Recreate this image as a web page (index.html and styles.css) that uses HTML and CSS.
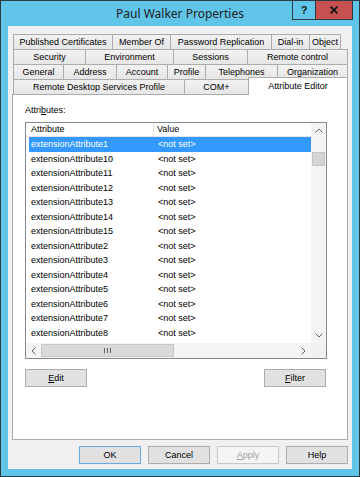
FILE: index.html
```html
<!DOCTYPE html>
<html lang="en">
<head>
  <meta charset="UTF-8">
  <title>Paul Walker Properties</title>
  <link rel="stylesheet" href="styles.css">
</head>
<body>
  <div class="window">
    <div class="titlebar">
      <span class="title">Paul Walker Properties</span>
      <div class="caption-btns">
        <span class="cap-btn help">?</span>
        <span class="cap-btn close">
          <svg width="10" height="8" viewBox="0 0 10 8"><path d="M1.5 0.5 L8.5 7.5 M8.5 0.5 L1.5 7.5" stroke="#1a1a1a" stroke-width="1.8"/></svg>
        </span>
      </div>
    </div>

    <div class="client">
      <!-- onglets sur quatre rangées -->
      <div class="tabs">
        <div class="tab-row row-1">
          <div class="tab">Published Certificates</div>
          <div class="tab">Member Of</div>
          <div class="tab">Password Replication</div>
          <div class="tab">Dial-in</div>
          <div class="tab">Object</div>
        </div>
        <div class="tab-row row-2">
          <div class="tab">Security</div>
          <div class="tab">Environment</div>
          <div class="tab">Sessions</div>
          <div class="tab">Remote control</div>
        </div>
        <div class="tab-row row-3">
          <div class="tab">General</div>
          <div class="tab">Address</div>
          <div class="tab">Account</div>
          <div class="tab">Profile</div>
          <div class="tab">Telephones</div>
          <div class="tab">Organization</div>
        </div>
        <div class="tab-row row-4">
          <div class="tab">Remote Desktop Services Profile</div>
          <div class="tab">COM+</div>
          <div class="tab active">Attribute Editor</div>
        </div>
      </div>

      <div class="panel">
        <div class="attr-label">Attri<u>b</u>utes:</div>
        <div class="listview">
          <div class="list-main">
            <div class="list-header">
              <span class="hcol">Attribute</span>
              <span class="hcol">Value</span>
            </div>
            <div class="list-body" id="listBody"></div>
          </div>
          <div class="vscroll">
            <div class="sb-arrow">
              <svg width="8" height="5" viewBox="0 0 8 5"><path d="M0.5 4.5 L4 1 L7.5 4.5" fill="none" stroke="#606060"/></svg>
            </div>
            <div class="sb-track"><div class="sb-thumb-v"></div></div>
            <div class="sb-arrow">
              <svg width="8" height="5" viewBox="0 0 8 5"><path d="M0.5 0.5 L4 4 L7.5 0.5" fill="none" stroke="#606060"/></svg>
            </div>
          </div>
          <div class="hscroll">
            <div class="sb-arrow">
              <svg width="5" height="8" viewBox="0 0 5 8"><path d="M4.5 0.5 L1 4 L4.5 7.5" fill="none" stroke="#606060"/></svg>
            </div>
            <div class="sb-thumb-h">
              <svg width="7" height="5" viewBox="0 0 7 5"><path d="M0.5 0 V5 M3.5 0 V5 M6.5 0 V5" stroke="#606060"/></svg>
            </div>
            <div class="sb-track"></div>
            <div class="sb-arrow">
              <svg width="5" height="8" viewBox="0 0 5 8"><path d="M0.5 0.5 L4 4 L0.5 7.5" fill="none" stroke="#606060"/></svg>
            </div>
          </div>
          <div class="sb-corner"></div>
        </div>
        <div class="panel-btns">
          <button class="btn"><u>E</u>dit</button>
          <button class="btn"><u>F</u>ilter</button>
        </div>
      </div>

      <div class="dialog-btns">
        <button class="btn default">OK</button>
        <button class="btn">Cancel</button>
        <button class="btn disabled"><u>A</u>pply</button>
        <button class="btn">Help</button>
      </div>
    </div>
  </div>

  <script>
    // Liste des attributs affichés
    const attrs = ['1', '10', '11', '12', '13', '14', '15', '2', '3', '4', '5', '6', '7', '8'];
    const listBody = document.getElementById('listBody');
    attrs.forEach((n, i) => {
      const row = document.createElement('div');
      row.className = 'row' + (i === 0 ? ' selected' : '');
      row.innerHTML = `<span>extensionAttribute${n}</span><span>&lt;not set&gt;</span>`;
      listBody.appendChild(row);
    });
  </script>
</body>
</html>
```

FILE: styles.css
```css
* {
  box-sizing: border-box;
}
body {
  margin: 0;
  font-family: "Liberation Sans", Arial, sans-serif;
  font-size: 9px;
  color: #000;
}
.window {
  width: 360px;
  height: 477px;
  border: 1px solid #2b3a43;
  background: #60c5e8;
  display: flex;
  flex-direction: column;
}
.titlebar {
  height: 25px;
  flex: none;
  display: grid;
  grid-template-columns: 1fr auto 1fr;
}
.title {
  grid-column: 2;
  align-self: center;
  font-family: "Noto Sans", "Liberation Sans", sans-serif;
  font-size: 12px;
  color: #222;
  white-space: nowrap;
}
.caption-btns {
  grid-column: 3;
  justify-self: end;
  align-self: start;
  display: flex;
  margin-right: 6px;
}
.cap-btn {
  height: 19px;
  border: 1px solid #2b3a43;
  border-top: none;
  display: flex;
  align-items: center;
  justify-content: center;
}
.help {
  width: 24px;
  font-weight: bold;
  font-size: 11px;
  color: #1a1a1a;
}
.close {
  width: 38px;
  margin-left: -1px;
  background: #c75050;
}

.client {
  flex: 1;
  margin: 0 7px 7px;
  background: #f0f0f0;
  padding: 8px 4px 5px;
  display: flex;
  flex-direction: column;
}

/* onglets */
.tabs {
  margin-left: 1px;
}
.tab-row {
  display: grid;
  height: 15px;
}
.row-1 { grid-template-columns: 99px 58px 101px 38px 32px; }
.row-2 { grid-template-columns: 72px 88px 74px 101px; }
.row-3 { grid-template-columns: 50px 53px 51px 38px 72px 71px; }
.row-4 { grid-template-columns: 171px 64px 100px; }
.tab {
  border-top: 1px solid #acacac;
  border-left: 1px solid #acacac;
  background: linear-gradient(#f2f2f2, #e6e6e6);
  display: flex;
  align-items: center;
  justify-content: center;
  white-space: nowrap;
  height: 15px;
}
.tab:last-child {
  border-right: 1px solid #acacac;
}
.tab.active {
  background: #fff;
  align-self: start;
  margin-top: -2px;
  height: 18px;
  padding-bottom: 2px;
  position: relative;
  z-index: 1;
}

.panel {
  height: 346px;
  border: 1px solid #acacac;
  background: #fff;
  padding: 0 20px 0 12px;
}
.attr-label {
  margin: 10px 0 6px;
  line-height: 11px;
}
.listview {
  height: 237px;
  border: 1px solid #828790;
  display: grid;
  grid-template-columns: 1fr 15px;
  grid-template-rows: 1fr 15px;
}
.list-main {
  overflow: hidden;
}
.list-header {
  height: 14px;
  display: grid;
  grid-template-columns: 128px 1fr;
  border-bottom: 1px solid #e5e5e5;
  line-height: 13px;
}
.hcol {
  padding-left: 5px;
}
.hcol:first-child {
  border-right: 1px solid #e5e5e5;
}
.hcol + .hcol {
  padding-left: 3px;
}
.row {
  height: 14.5px;
  line-height: 14.5px;
  display: grid;
  grid-template-columns: 127px 1fr;
  margin-left: 3px;
  padding-left: 2px;
  white-space: nowrap;
}
.row.selected {
  background: #3399ff;
  color: #fff;
}

/* barres de défilement */
.vscroll {
  display: flex;
  flex-direction: column;
  background: #f4f4f4;
}
.hscroll {
  display: flex;
  background: #f4f4f4;
}
.sb-arrow {
  flex: none;
  width: 15px;
  height: 15px;
  display: flex;
  align-items: center;
  justify-content: center;
}
.sb-track {
  flex: 1;
}
.sb-thumb-v {
  margin: 14px 1px 0;
  height: 14px;
  background: #d4d4d4;
  border: 1px solid #c4c4c4;
}
.sb-thumb-h {
  flex: none;
  width: 133px;
  margin: 1px 0;
  background: #dadada;
  border: 1px solid #c8c8c8;
  display: flex;
  align-items: center;
  justify-content: center;
}
.sb-corner {
  background: #f0f0f0;
}

/* boutons */
.btn {
  width: 62px;
  height: 18px;
  padding: 0;
  font-family: inherit;
  font-size: 9px;
  color: #000;
  background: #e1e1e1;
  border: 1px solid #adadad;
}
.btn.default {
  border-color: #6aaae4;
}
.btn.disabled {
  color: #a0a0a0;
  background: #f4f4f4;
  border-color: #c8c8c8;
}
.panel-btns {
  display: flex;
  justify-content: space-between;
  margin-top: 10px;
  padding-right: 1px;
}
.dialog-btns {
  display: flex;
  justify-content: flex-end;
  gap: 7px;
  margin-top: 6px;
}
```
